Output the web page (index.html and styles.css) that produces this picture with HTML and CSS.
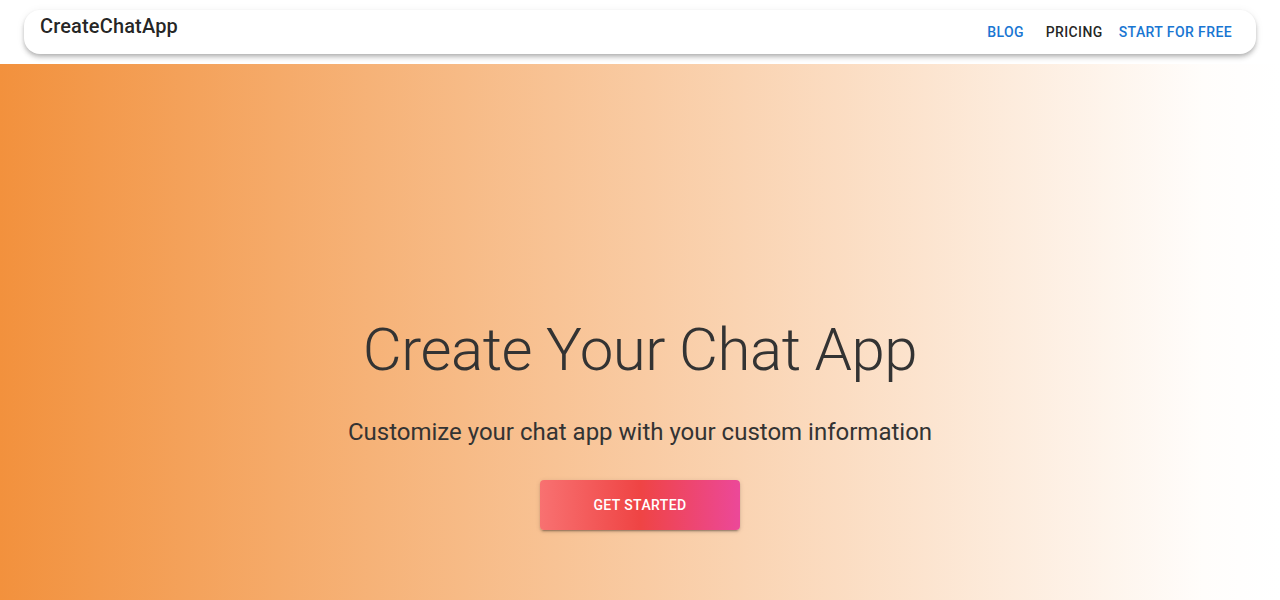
FILE: index.html
```html
<!DOCTYPE html>
<html lang="en">
<head>
<meta charset="utf-8">
<title>CreateChatApp</title>
<link rel="stylesheet" href="styles.css">
</head>
<body>
<header class="topbar">
  <nav class="navbar">
    <div class="logo">CreateChatApp</div>
    <div class="links">
      <a class="link link-blue" href="#">Blog</a>
      <a class="link link-dark" href="#">Pricing</a>
      <a class="link link-blue" href="#">Start for free</a>
    </div>
  </nav>
</header>
<section class="hero">
  <h1 class="title">Create Your Chat App</h1>
  <p class="subtitle">Customize your chat app with your custom information</p>
  <a class="cta" href="#">Get Started</a>
</section>
</body>
</html>
```
FILE: styles.css
```css
* { box-sizing: border-box; }
html, body { margin: 0; padding: 0; }
body {
  font-family: Roboto, "Liberation Sans", Arial, sans-serif;
  background: #fff;
  color: rgba(0,0,0,0.87);
  overflow: hidden;
}
.topbar {
  height: 64px;
  padding: 10px 24px 0;
  background: #fff;
}
.navbar {
  height: 44px;
  background: #fff;
  border-radius: 16px;
  box-shadow: 0 2px 4px -1px rgba(0,0,0,0.2), 0 4px 5px 0 rgba(0,0,0,0.14), 0 1px 10px 0 rgba(0,0,0,0.06);
  display: flex;
  justify-content: space-between;
  align-items: flex-start;
  padding: 0 16px;
}
.logo {
  font-size: 20px;
  font-weight: 500;
  line-height: 32px;
  letter-spacing: 0.0075em;
  color: rgba(0,0,0,0.87);
}
.links {
  display: flex;
  align-items: center;
  gap: 0;
  padding-top: 7px;
}
.link {
  display: inline-block;
  min-width: 64px;
  padding: 6px 8px;
  font-size: 14px;
  font-weight: 500;
  line-height: 18px;
  letter-spacing: 0.02857em;
  text-transform: uppercase;
  text-decoration: none;
  text-align: center;
}
.link-blue { color: #1976d2; }
.link-dark { color: rgba(0,0,0,0.87); }
.hero {
  height: 536px;
  background: linear-gradient(to right, #f2913d 0%, #fffdfb 94%, #ffffff 100%);
  display: flex;
  flex-direction: column;
  align-items: center;
  padding-top: 250px;
}
.title {
  margin: 0;
  font-size: 60px;
  font-weight: 300;
  line-height: 72px;
  letter-spacing: -0.00833em;
  color: #333;
}
.subtitle {
  margin: 28px 0 0;
  font-size: 24px;
  font-weight: 400;
  line-height: 36px;
  color: #333;
}
.cta {
  margin-top: 30px;
  width: 200px;
  height: 50px;
  display: flex;
  align-items: center;
  justify-content: center;
  border-radius: 4px;
  background: linear-gradient(to right, #f87171 0%, #ef4444 50%, #ec4899 100%);
  box-shadow: 0 3px 1px -2px rgba(0,0,0,0.2), 0 2px 2px 0 rgba(0,0,0,0.14), 0 1px 5px 0 rgba(0,0,0,0.12);
  color: #fff;
  font-size: 14px;
  font-weight: 500;
  letter-spacing: 0.02857em;
  text-transform: uppercase;
  text-decoration: none;
}
```
